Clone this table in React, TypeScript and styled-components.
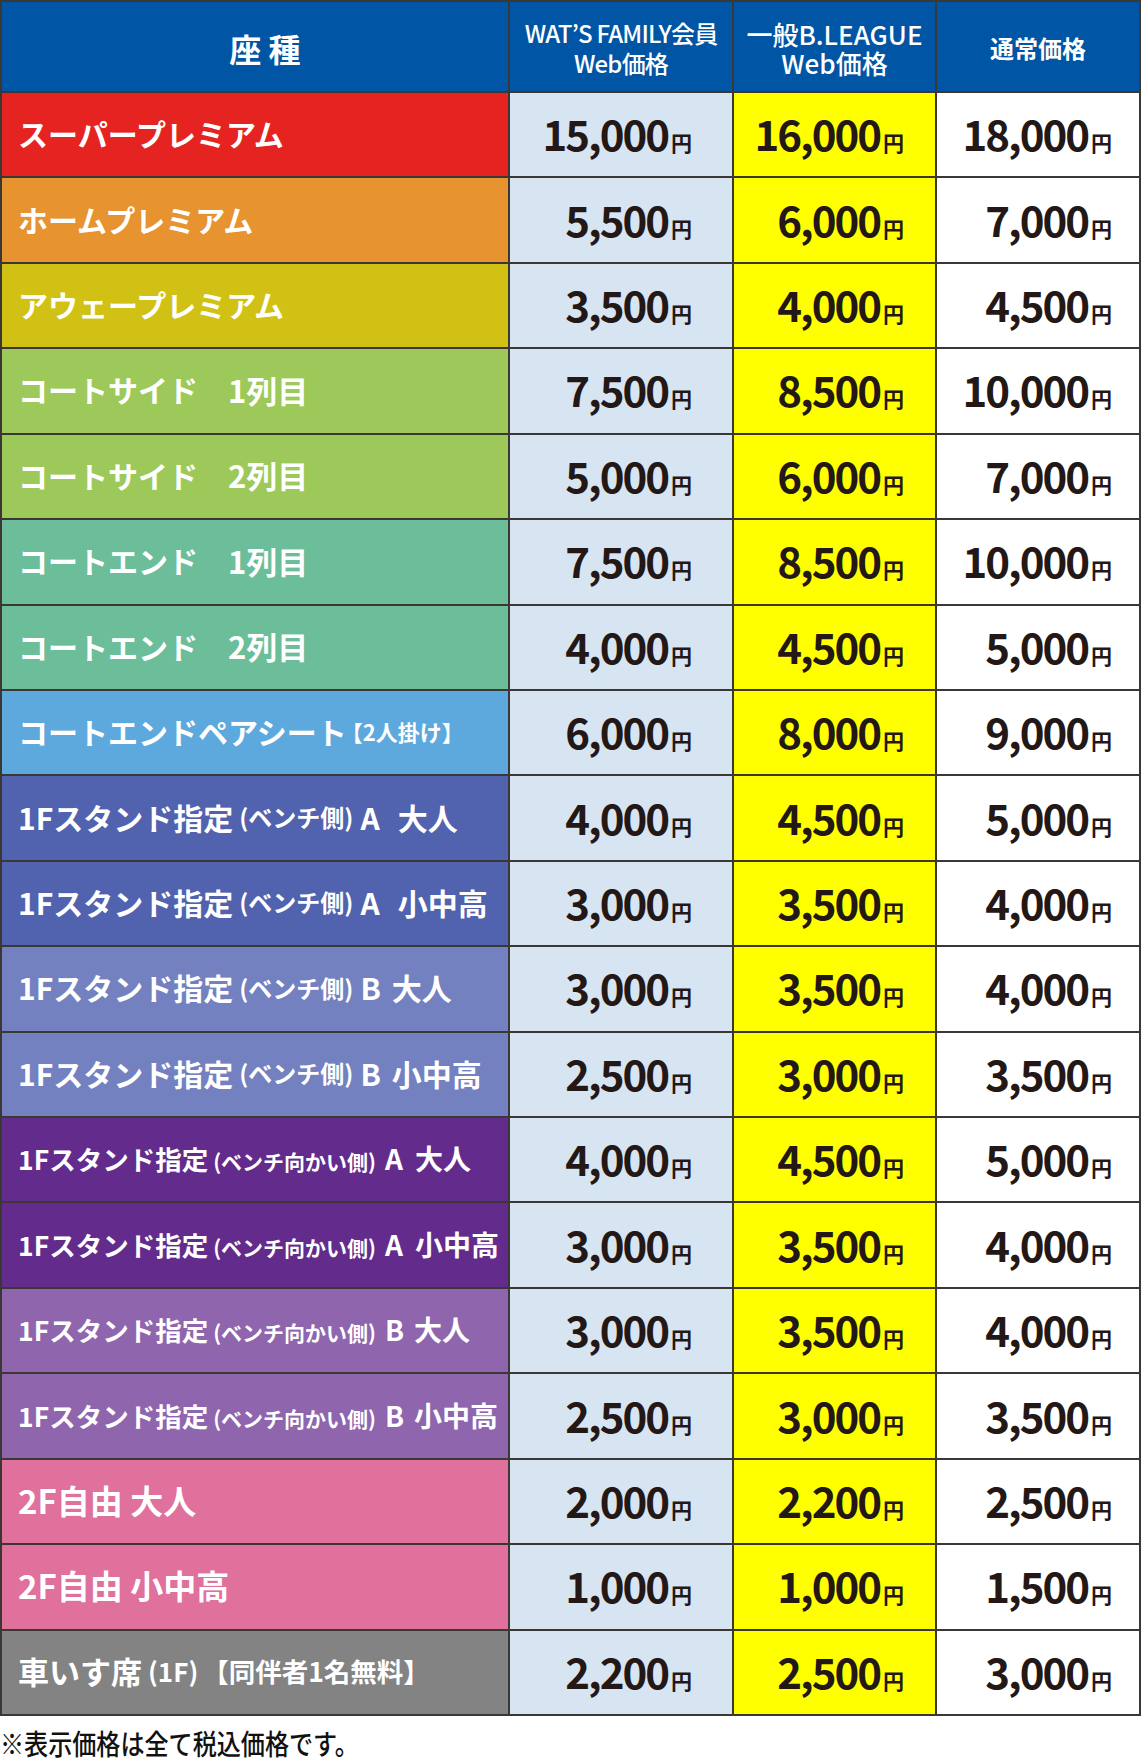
import React from 'react';
import styled, { createGlobalStyle } from 'styled-components';

const GlobalStyle = createGlobalStyle`
  html, body {
    margin: 0;
    padding: 0;
    background: #fff;
  }
  body {
    font-family: "Noto Sans CJK JP", "Noto Sans", sans-serif;
  }
`;

const Page = styled.div`
  width: 1141px;
`;

const Table = styled.div`
  display: grid;
  grid-template-columns: 506px 222px 201px 202px;
  grid-template-rows: 89px repeat(19, 1fr);
  gap: 2px;
  padding: 2px;
  height: 1716px;
  box-sizing: border-box;
  background: #3b3735;
`;

const HeadCell = styled.div<{ $size: number; $lh: number; $weight: number; $shift?: number; $spacing?: number }>`
  background: #0055a5;
  color: #fff;
  display: flex;
  flex-direction: column;
  align-items: center;
  justify-content: center;
  text-align: center;
  font-weight: ${p => p.$weight};
  font-size: ${p => p.$size}px;
  line-height: ${p => p.$lh}px;
  letter-spacing: ${p => p.$spacing ?? 0}px;
  padding-top: 2px;
  padding-left: ${p => p.$shift ?? 0}px;
  white-space: nowrap;
  overflow: hidden;
`;

const HeadLine = styled.span`
  display: block;
`;

const SeatCell = styled.div<{ $bg: string }>`
  background: ${p => p.$bg};
  color: #fff;
  display: flex;
  align-items: center;
  padding-left: 16px;
  padding-bottom: 3px;
  font-weight: 700;
  font-size: 30px;
  white-space: nowrap;
`;

const Part = styled.span<{ $size?: number; $ml?: number; $mr?: number }>`
  font-size: ${p => (p.$size ? `${p.$size}px` : 'inherit')};
  margin-left: ${p => p.$ml ?? 0}px;
  margin-right: ${p => p.$mr ?? 0}px;
`;

const PriceCell = styled.div<{ $bg: string; $pad: number }>`
  background: ${p => p.$bg};
  display: flex;
  align-items: center;
  justify-content: flex-end;
  padding-right: ${p => p.$pad}px;
  padding-bottom: 3px;
  color: #231815;
`;

const Price = styled.span`
  display: inline-flex;
  align-items: baseline;
  font-weight: 700;
  line-height: 1;
`;

const Amount = styled.span`
  font-size: 42px;
  letter-spacing: -2px;
`;

const Yen = styled.span`
  font-size: 21px;
  margin-left: 3px;
`;

const Note = styled.p`
  margin: 0;
  padding-top: 12px;
  font-size: 28px;
  line-height: 30px;
  font-weight: 500;
  color: #111;
  white-space: nowrap;
  transform: scaleX(0.86);
  transform-origin: left center;
`;

type Row = {
  label: React.ReactNode;
  bg: string;
  prices: [string, string, string];
};

const benchLabel = (side: string, who: string) => (
  <>
    1Fスタンド指定
    <Part $size={24} $ml={6} $mr={7}>(ベンチ側)</Part>
    <Part $mr={side === 'A' ? 18 : 11}>{side}</Part>
    {who}
  </>
);

const acrossLabel = (side: string, who: string) => (
  <Part $size={28}>
    <Part $size={26.5}>1Fスタンド指定</Part>
    <Part $size={21} $ml={5} $mr={9}>(ベンチ向かい側)</Part>
    <Part $mr={side === 'A' ? 12 : 10}>{side}</Part>
    {who}
  </Part>
);

const rows: Row[] = [
  { label: 'スーパープレミアム', bg: '#e52421', prices: ['15,000', '16,000', '18,000'] },
  { label: 'ホームプレミアム', bg: '#e69330', prices: ['5,500', '6,000', '7,000'] },
  { label: 'アウェープレミアム', bg: '#d2c115', prices: ['3,500', '4,000', '4,500'] },
  { label: <>コートサイド　<Part $size={31}>1列目</Part></>, bg: '#9cc959', prices: ['7,500', '8,500', '10,000'] },
  { label: <>コートサイド　<Part $size={31}>2列目</Part></>, bg: '#9cc959', prices: ['5,000', '6,000', '7,000'] },
  { label: <>コートエンド　<Part $size={31}>1列目</Part></>, bg: '#6bbe99', prices: ['7,500', '8,500', '10,000'] },
  { label: <>コートエンド　<Part $size={31}>2列目</Part></>, bg: '#6bbe99', prices: ['4,000', '4,500', '5,000'] },
  {
    label: <>コートエンドペアシート<Part $size={22} $ml={-6}>【2人掛け】</Part></>,
    bg: '#5da9de',
    prices: ['6,000', '8,000', '9,000'],
  },
  { label: benchLabel('A', '大人'), bg: '#5162ae', prices: ['4,000', '4,500', '5,000'] },
  { label: benchLabel('A', '小中高'), bg: '#5162ae', prices: ['3,000', '3,500', '4,000'] },
  { label: benchLabel('B', '大人'), bg: '#7381c0', prices: ['3,000', '3,500', '4,000'] },
  { label: benchLabel('B', '小中高'), bg: '#7381c0', prices: ['2,500', '3,000', '3,500'] },
  { label: acrossLabel('A', '大人'), bg: '#632b8c', prices: ['4,000', '4,500', '5,000'] },
  { label: acrossLabel('A', '小中高'), bg: '#632b8c', prices: ['3,000', '3,500', '4,000'] },
  { label: acrossLabel('B', '大人'), bg: '#8f65ad', prices: ['3,000', '3,500', '4,000'] },
  { label: acrossLabel('B', '小中高'), bg: '#8f65ad', prices: ['2,500', '3,000', '3,500'] },
  { label: <Part $size={33}>2F自由 大人</Part>, bg: '#e0709c', prices: ['2,000', '2,200', '2,500'] },
  { label: <Part $size={33}>2F自由 小中高</Part>, bg: '#e0709c', prices: ['1,000', '1,000', '1,500'] },
  {
    label: (
      <>
        <Part $size={31}>車いす席</Part>
        <Part $size={26} $ml={6} $mr={4}>(1F)</Part>
        <Part $size={26.5}>【同伴者1名無料】</Part>
      </>
    ),
    bg: '#838384',
    prices: ['2,200', '2,500', '3,000'],
  },
];

const priceCols = [
  { bg: '#d7e5f3', pad: 40 },
  { bg: '#ffff00', pad: 31 },
  { bg: '#ffffff', pad: 27 },
];

export default function App() {
  return (
    <Page>
      <GlobalStyle />
      <Table>
        <HeadCell $size={32} $lh={40} $weight={700} $shift={20}>座 種</HeadCell>
        <HeadCell $size={24} $lh={30} $weight={500} $spacing={-0.8}>
          <HeadLine>WAT’S FAMILY会員</HeadLine>
          <HeadLine>Web価格</HeadLine>
        </HeadCell>
        <HeadCell $size={26} $lh={29} $weight={500}>
          <HeadLine>一般B.LEAGUE</HeadLine>
          <HeadLine>Web価格</HeadLine>
        </HeadCell>
        <HeadCell $size={24} $lh={30} $weight={700}>通常価格</HeadCell>
        {rows.map((row, i) => (
          <React.Fragment key={i}>
            <SeatCell $bg={row.bg}>{row.label}</SeatCell>
            {row.prices.map((price, j) => (
              <PriceCell key={j} $bg={priceCols[j].bg} $pad={priceCols[j].pad}>
                <Price>
                  <Amount>{price}</Amount>
                  <Yen>円</Yen>
                </Price>
              </PriceCell>
            ))}
          </React.Fragment>
        ))}
      </Table>
      <Note>※表示価格は全て税込価格です。</Note>
    </Page>
  );
}
